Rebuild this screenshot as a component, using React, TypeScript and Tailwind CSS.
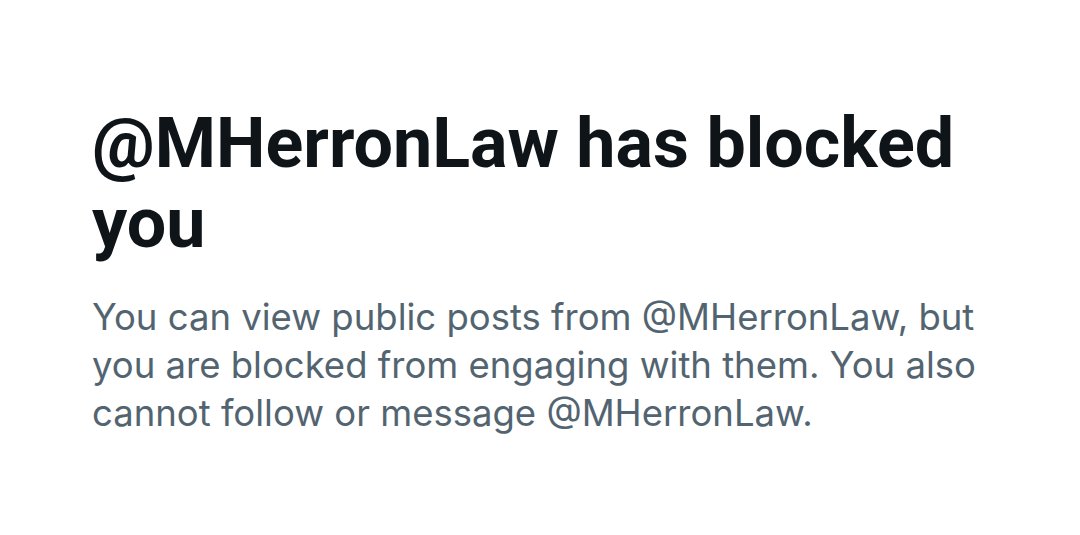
export default function App() {
  return (
    <div className="w-[1080px] h-[535px] bg-white">
      <div className="pl-[92px] pr-[60px] pt-[103px]">
        <h1 className="text-[70px] leading-[80px] font-bold text-[#0f1419] font-['Roboto',sans-serif]">
          @MHerronLaw has blocked you
        </h1>
        <p className="mt-[30px] text-[36.5px] leading-[48px] text-[#536471] font-['Inter',sans-serif]">
          You can view public posts from @MHerronLaw, but you are blocked from engaging with them. You also cannot follow or message @MHerronLaw.
        </p>
      </div>
    </div>
  );
}
